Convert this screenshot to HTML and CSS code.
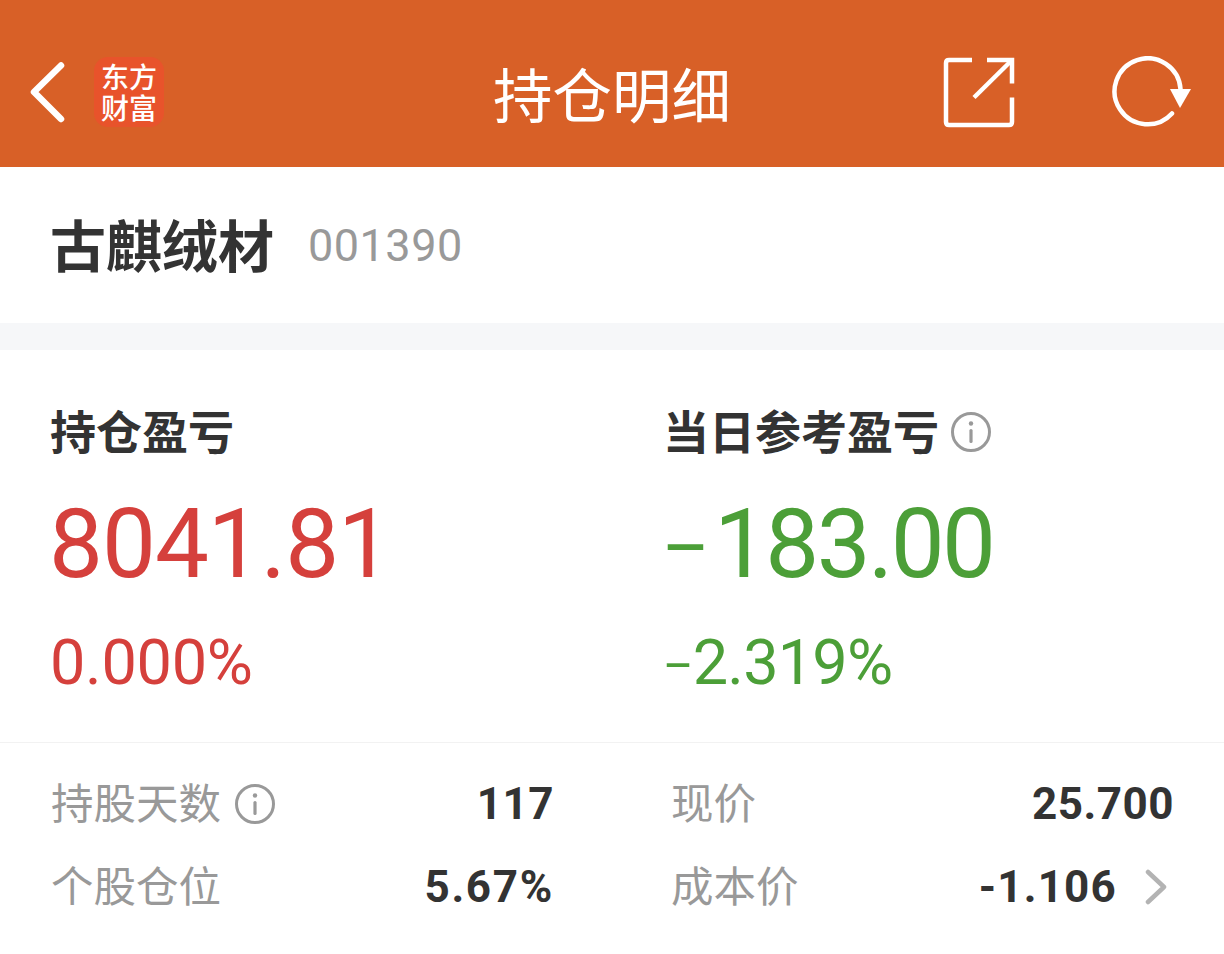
FILE: index.html
```html
<!DOCTYPE html>
<html lang="zh-CN">
<head>
    <meta charset="UTF-8">
    <meta name="viewport" content="width=device-width, initial-scale=1.0">
    <title>持仓明细</title>
    <link rel="stylesheet" href="styles.css">
</head>
<body>
    <!-- Header -->
    <header class="topbar">
        <div class="topbar-left">
            <svg class="back-icon" width="36" height="62" viewBox="0 0 36 62">
                <path d="M32 4.5 L5 31 L32 58" fill="none" stroke="#fff" stroke-width="6.5" stroke-linecap="round" stroke-linejoin="round"/>
            </svg>
            <div class="logo"><div class="logo-text">东方财富</div></div>
        </div>
        <div class="page-title">持仓明细</div>
        <div class="topbar-right">
            <svg width="72" height="72" viewBox="0 0 72 72">
                <path d="M29 4 H6 Q3 4 3 7 V66 Q3 69 6 69 H66 Q69 69 69 66 V41.5" fill="none" stroke="#fff" stroke-width="4.5"/>
                <path d="M44 4 H69 V27.5" fill="none" stroke="#fff" stroke-width="4.5"/>
                <path d="M68 5 L31 41.5" fill="none" stroke="#fff" stroke-width="4.5"/>
            </svg>
            <svg width="80" height="72" viewBox="0 0 80 72">
                <path d="M60 57.5 A33 33 0 1 1 68.5 33" fill="none" stroke="#fff" stroke-width="4.5" stroke-linecap="round"/>
                <path d="M58 33 H79 L68 52 Z" fill="#fff"/>
            </svg>
        </div>
    </header>

    <!-- Stock name -->
    <section class="stock-row">
        <div class="stock-name">古麒绒材</div>
        <div class="stock-code">001390</div>
    </section>

    <div class="band"></div>

    <!-- Profit summary -->
    <section class="summary">
        <div class="summary-col">
            <div class="summary-label">持仓盈亏</div>
            <div class="summary-value red">8041.81</div>
            <div class="summary-pct red">0.000%</div>
        </div>
        <div class="summary-col summary-col-right">
            <div class="summary-label">当日参考盈亏
                <svg class="info-icon" width="40" height="40" viewBox="0 0 40 40">
                    <circle cx="20" cy="20" r="18.5" fill="none" stroke="#999" stroke-width="3"/>
                    <circle cx="20" cy="11.5" r="2.2" fill="#999"/>
                    <rect x="18.4" y="17" width="3.2" height="14" rx="1.6" fill="#999"/>
                </svg>
            </div>
            <div class="summary-value green"><span class="minus">-</span>183.00</div>
            <div class="summary-pct green"><span class="minus">-</span>2.319%</div>
        </div>
    </section>

    <!-- Detail rows -->
    <section class="details">
        <div class="detail-col">
            <div class="detail-row">
                <div class="detail-label">持股天数
                    <svg class="info-icon" width="40" height="40" viewBox="0 0 40 40">
                        <circle cx="20" cy="20" r="18.5" fill="none" stroke="#999" stroke-width="3"/>
                        <circle cx="20" cy="11.5" r="2.2" fill="#999"/>
                        <rect x="18.4" y="17" width="3.2" height="14" rx="1.6" fill="#999"/>
                    </svg>
                </div>
                <div class="detail-value">117</div>
            </div>
            <div class="detail-row">
                <div class="detail-label">个股仓位</div>
                <div class="detail-value wide">5.67%</div>
            </div>
        </div>
        <div class="detail-col detail-col-right">
            <div class="detail-row">
                <div class="detail-label">现价</div>
                <div class="detail-value">25.700</div>
            </div>
            <div class="detail-row">
                <div class="detail-label">成本价</div>
                <div class="detail-value cost">-1.106
                    <svg class="chevron" width="22" height="36" viewBox="0 0 22 36">
                        <path d="M3 3 L19 18 L3 33" fill="none" stroke="#b3b3b3" stroke-width="4.5" stroke-linecap="round" stroke-linejoin="round"/>
                    </svg>
                </div>
            </div>
        </div>
    </section>
</body>
</html>
```

FILE: styles.css
```css
/* Global Styles */
body, html {
    margin: 0;
    padding: 0;
    width: 100%;
    height: 100%;
    overflow: hidden;
    background-color: #fff;
    font-family: Roboto, "Noto Sans CJK SC", sans-serif;
    color: #333;
}

/* Header */
.topbar {
    position: relative;
    height: 167px;
    box-sizing: border-box;
    padding: 16px 32px 0 29px;
    background-color: #d86027;
    display: flex;
    align-items: center;
    justify-content: space-between;
    color: #fff;
}

.topbar-left {
    display: flex;
    align-items: center;
    gap: 29px;
}

.logo {
    width: 70px;
    height: 70px;
    border-radius: 14px;
    background-color: #e8532b;
    display: flex;
    align-items: center;
    justify-content: center;
}

.logo-text {
    width: 56px;
    font-family: "Noto Sans CJK SC", sans-serif;
    font-size: 28px;
    line-height: 31px;
    font-weight: 500;
}

.page-title {
    position: absolute;
    left: 0;
    right: 0;
    text-align: center;
    font-family: "Noto Sans CJK SC", sans-serif;
    font-size: 59.5px;
    line-height: 70px;
}

.topbar-right {
    display: flex;
    align-items: center;
    gap: 97px;
}

/* Stock row */
.stock-row {
    height: 156px;
    display: flex;
    align-items: center;
    padding-left: 50px;
    gap: 34px;
}

.stock-name {
    margin-bottom: 4px;
    font-family: "Noto Sans CJK SC", sans-serif;
    font-size: 56px;
    font-weight: 700;
    line-height: 70px;
}

.stock-code {
    font-size: 45px;
    letter-spacing: 0.5px;
    color: #999;
}

.band {
    height: 27px;
    background-color: #f6f7f9;
}

/* Summary */
.summary {
    height: 393px;
    display: flex;
    border-bottom: 1px solid #f2f2f2;
    box-sizing: border-box;
}

.summary-col {
    flex: none;
    width: 613px;
    padding: 49px 0 0 52px;
    box-sizing: border-box;
    margin-right: 52px;
}

.summary-col-right {
    width: 559px;
    padding-left: 0;
    margin-right: 0;
}

.summary-label {
    display: flex;
    align-items: center;
    gap: 12px;
    height: 60px;
    margin-left: -2px;
    font-family: "Noto Sans CJK SC", sans-serif;
    font-size: 46px;
    font-weight: 700;
}

.summary-label .info-icon {
    margin-top: 6px;
}

.summary-value {
    margin-top: 30px;
    margin-left: -3px;
    font-size: 96px;
    line-height: 110px;
    letter-spacing: -1px;
}

.summary-pct {
    margin-top: 29px;
    margin-left: -2px;
    font-size: 63px;
    line-height: 70px;
    letter-spacing: -0.3px;
}

.summary-col-right .summary-value {
    margin-left: 0;
    letter-spacing: -2.6px;
}

.summary-col-right .summary-pct {
    margin-left: 0;
    letter-spacing: -0.8px;
}

/* The hyphen in the reference is longer and thinner than Roboto's */
.minus {
    display: inline-block;
    width: 0.51em;
    transform: scale(1.55, 0.8);
    transform-origin: left center;
}

.summary-pct .minus {
    width: 0.44em;
    transform: scale(1.5, 0.8);
}

.red {
    color: #d5403c;
}

.green {
    color: #4c9f38;
}

/* Details */
.details {
    display: flex;
    padding: 19px 50px 0 51px;
}

.detail-col {
    width: 503px;
}

.detail-col-right {
    margin-left: 117px;
}

.detail-row {
    display: flex;
    align-items: center;
    justify-content: space-between;
    height: 83px;
}

.detail-label {
    display: flex;
    align-items: center;
    gap: 14px;
    margin-bottom: 6px;
    font-family: "Noto Sans CJK SC", sans-serif;
    font-size: 42.5px;
    color: #999;
}

.detail-label .info-icon {
    margin-top: 6px;
}

.detail-value {
    display: flex;
    align-items: center;
    gap: 28px;
    font-size: 44px;
    font-weight: 700;
    letter-spacing: 0.5px;
}

.detail-value.wide {
    letter-spacing: 1.7px;
}

.detail-value.cost {
    letter-spacing: 1.2px;
}

.chevron {
    margin-right: 7px;
}
```
